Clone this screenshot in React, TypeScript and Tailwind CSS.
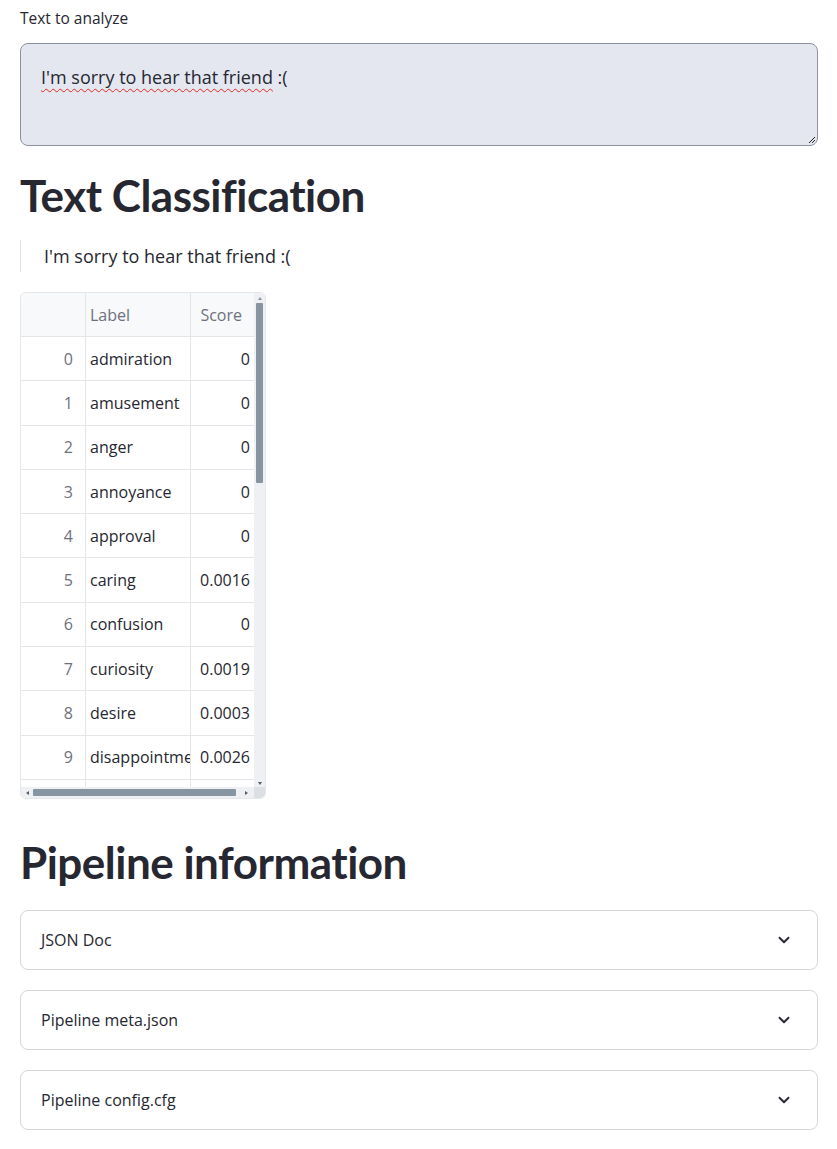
import { ChevronDown } from 'lucide-react';

const ROWS: [string, string][] = [
  ['admiration', '0'],
  ['amusement', '0'],
  ['anger', '0'],
  ['annoyance', '0'],
  ['approval', '0'],
  ['caring', '0.0016'],
  ['confusion', '0'],
  ['curiosity', '0.0019'],
  ['desire', '0.0003'],
  ['disappointment', '0.0026'],
  ['', ''],
];

const EXPANDERS = ['JSON Doc', 'Pipeline meta.json', 'Pipeline config.cfg'];

function ScoreTable() {
  return (
    <div className="relative w-[246px] h-[507px] rounded-[6px] border border-[#e6e7ea] overflow-hidden bg-white">
      <div className="w-[235px] h-[495px] overflow-hidden">
        {/* header */}
        <div className="flex h-[44px] bg-[#f8f9fb] border-b border-[#e4e5e8] text-[16px] text-[#6d717c]">
          <div className="w-[65px] border-r border-[#e4e5e8]" />
          <div className="w-[105px] border-r border-[#e4e5e8] flex items-center px-[4px]">Label</div>
          <div className="w-[65px] flex items-center justify-end pr-[14px]">Score</div>
        </div>
        {ROWS.map(([label, score], i) => (
          <div key={i} className="flex h-[44.3px] border-b border-[#e4e5e8] text-[16px] text-[#262730]">
            <div className="w-[65px] shrink-0 border-r border-[#e4e5e8] flex items-center justify-end pr-[12px] text-[#6d717c]">{label ? i : ''}</div>
            <div className="w-[105px] shrink-0 border-r border-[#e4e5e8] flex items-center pl-[4px] overflow-hidden whitespace-nowrap">{label}</div>
            <div className="w-[65px] shrink-0 flex items-center justify-end pr-[6px]">{score}</div>
          </div>
        ))}
      </div>
      {/* vertical scrollbar */}
      <div className="absolute right-0 top-0 w-[11px] h-[495px] bg-[#eef0f3] flex flex-col items-center">
        <div className="h-[10px] flex items-center justify-center">
          <div className="w-0 h-0 border-l-[2.5px] border-r-[2.5px] border-b-[3px] border-l-transparent border-r-transparent border-b-[#8a96a3]" />
        </div>
        <div className="w-[7px] h-[180px] bg-[#8795a3] rounded-[1px]" />
        <div className="flex-1" />
        <div className="h-[10px] flex items-center justify-center">
          <div className="w-0 h-0 border-l-[2.5px] border-r-[2.5px] border-t-[3px] border-l-transparent border-r-transparent border-t-[#555b66]" />
        </div>
      </div>
      {/* horizontal scrollbar */}
      <div className="absolute left-0 bottom-0 w-[235px] h-[11px] bg-[#eef0f3] flex items-center">
        <div className="w-[12px] flex items-center justify-center">
          <div className="w-0 h-0 border-t-[2.5px] border-b-[2.5px] border-r-[3px] border-t-transparent border-b-transparent border-r-[#555b66]" />
        </div>
        <div className="w-[203px] h-[7px] bg-[#8795a3] rounded-[1px]" />
        <div className="flex-1 flex items-center justify-center">
          <div className="w-0 h-0 border-t-[2.5px] border-b-[2.5px] border-l-[3px] border-t-transparent border-b-transparent border-l-[#555b66]" />
        </div>
      </div>
      <div className="absolute right-0 bottom-0 w-[11px] h-[11px] bg-[#dcdfe4]" />
    </div>
  );
}

export default function App() {
  return (
    <div className="min-h-[1149px] bg-white pl-[20px] pr-[19px] pt-[8px] text-[#262730] font-['Open_Sans','Noto_Sans',sans-serif]">
      <label className="block text-[15.5px] leading-[20px] text-[#262730]">Text to analyze</label>

      <div className="relative mt-[15px] h-[103px] rounded-[8px] border border-[#8d939c] bg-[#e4e7f0] px-[20px] pt-[20px]">
        <span className="text-[18px] leading-[27px] text-[#262730] underline decoration-wavy decoration-[#e5261f] decoration-[1px] underline-offset-[4px]">
          I'm sorry to hear that friend
        </span>
        <span className="text-[18px] leading-[27px] text-[#262730]"> :(</span>
        <svg className="absolute right-[1px] bottom-[1px]" width="8" height="8" viewBox="0 0 8 8">
          <path d="M7 1 L1 7 M7 4 L4 7" stroke="#222" strokeWidth="1" />
        </svg>
      </div>

      <h1 className="mt-[22px] text-[44px] leading-[54px] font-bold tracking-[-0.5px] text-[#262730] font-['Lato',sans-serif]">Text Classification</h1>

      <div className="mt-[18px] border-l border-[#e2e3e6] pl-[23px] h-[32px] flex items-center text-[18px]">
        I'm sorry to hear that friend :(
      </div>

      <div className="mt-[20px]">
        <ScoreTable />
      </div>

      <h1 className="mt-[36px] text-[44px] leading-[54px] font-bold tracking-[-0.5px] text-[#262730] font-['Lato',sans-serif]">Pipeline information</h1>

      <div className="mt-[21px] flex flex-col gap-[20px]">
        {EXPANDERS.map((title) => (
          <div key={title} className="h-[60px] rounded-[8px] border border-[#d5d6da] flex items-center justify-between pl-[20px] pr-[24px]">
            <span className="text-[16px] text-[#262730]">{title}</span>
            <ChevronDown size={18} strokeWidth={2.5} className="text-[#262730]" />
          </div>
        ))}
      </div>
    </div>
  );
}
